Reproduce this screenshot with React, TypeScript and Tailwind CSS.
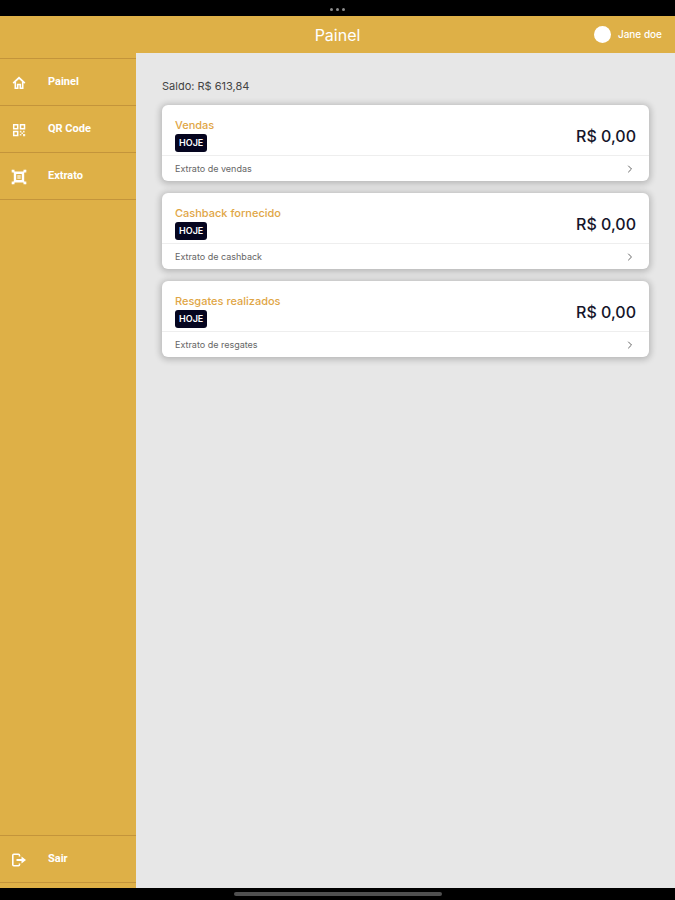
import { ChevronRight } from "lucide-react";
import type { ReactNode } from "react";

type Card = {
  title: string;
  value: string;
  link: string;
};

const cards: Card[] = [
  { title: "Vendas", value: "R$ 0,00", link: "Extrato de vendas" },
  { title: "Cashback fornecido", value: "R$ 0,00", link: "Extrato de cashback" },
  { title: "Resgates realizados", value: "R$ 0,00", link: "Extrato de resgates" },
];

function HomeIcon() {
  return (
    <svg width="16" height="16" viewBox="0 0 16 16" fill="none" stroke="currentColor" aria-hidden="true">
      <path d="M2.200 8.200L8 2.800l5.800 5.400" strokeWidth="1.800" />
      <path d="M4.300 7v6.200h2.400V9.500h2.600v3.700h2.400V7" strokeWidth="1.600" />
    </svg>
  );
}

function QrIcon() {
  return (
    <svg width="16" height="16" viewBox="0 0 16 16" fill="none" stroke="currentColor" aria-hidden="true">
      <path d="M2.700 2.700h4v4h-4zM9.500 2.700h4v4h-4zM2.700 9.500h4v4h-4z" strokeWidth="1.500" />
      <path
        d="M8.800 8.800h1.600v1.600H8.800zM12 8.800h1.600v1.600H12zM10.400 10.400H12V12h-1.600zM8.800 12h1.600v1.600H8.800zM12 12h2.200v2.200H12z"
        fill="currentColor"
        stroke="none"
        fillOpacity="0.85"
      />
    </svg>
  );
}

function StatementIcon() {
  return (
    <svg width="16" height="16" viewBox="0 0 16 16" fill="none" stroke="currentColor" aria-hidden="true">
      <path d="M4 3.800h8v8.400H4z" strokeWidth="2.400" />
      <path d="M1.300 3.500V1.300h2.200M12.500 1.300h2.200v2.200M14.700 12.500v2.200h-2.200M3.500 14.700H1.300v-2.200" strokeWidth="1.200" />
      <path d="M1.300 1.300l2.700 2.700M14.700 1.300L12 4M14.700 14.700L12 12M1.300 14.700L4 12" strokeWidth="1.600" />
      <path d="M6.300 6h3.400v4H6.300z" fill="currentColor" stroke="none" fillOpacity="0.6" />
    </svg>
  );
}

function LogoutIcon() {
  return (
    <svg width="16" height="16" viewBox="0 0 16 16" fill="none" stroke="currentColor" aria-hidden="true">
      <path d="M8.500 4.500V3.300q0-1-1-1H2.800q-1 0-1 1v9.400q0 1 1 1h4.700q1 0 1-1v-1.200" strokeWidth="1.600" />
      <path d="M5.500 8H12" strokeWidth="2" />
      <path d="M10.500 4.500L15 8l-4.500 3.500z" fill="currentColor" stroke="none" />
    </svg>
  );
}

function MenuItem({ icon, label }: { icon: ReactNode; label: string }) {
  return (
    <li className="border-b border-[#c3943b]">
      <a href="#" className="flex h-[46px] items-center gap-5 pt-px pl-[11px] text-[11px] font-bold text-white">
        <span className="flex w-4 shrink-0 justify-center">{icon}</span>
        <span className="pl-px">{label}</span>
      </a>
    </li>
  );
}

function SummaryCard({ card }: { card: Card }) {
  return (
    <section className="rounded-md bg-white shadow-[0_1px_6px_2px_rgba(0,0,0,0.2)]">
      <div className="flex h-[50px] items-center justify-between px-[13px] pt-3">
        <div className="flex flex-col items-start gap-px self-start">
          <h2 className="text-[11px] leading-4 font-medium text-[#dfa646]">{card.title}</h2>
          <span className="rounded-[3px] bg-[#05051f] px-1 text-[9px] leading-[18px] font-semibold text-white">HOJE</span>
        </div>
        <p className="text-base font-medium text-[#15152a]">{card.value}</p>
      </div>
      <a
        href="#"
        className="flex h-[26px] items-center justify-between border-t border-[#eeeeee] px-[13px] text-[9px] text-[#666666]"
      >
        {card.link}
        <ChevronRight size={12} className="text-[#666666]" />
      </a>
    </section>
  );
}

export default function App() {
  return (
    <div className="flex min-h-screen flex-col bg-black font-['Inter','Liberation_Sans',sans-serif]">
      {/* Status bar */}
      <div className="flex h-4 items-center justify-center gap-[3px] pt-[2px]">
        <span className="size-[3px] rounded-full bg-[#8c8c8c]" />
        <span className="size-[3px] rounded-full bg-[#8c8c8c]" />
        <span className="size-[3px] rounded-full bg-[#8c8c8c]" />
      </div>

      <header className="grid h-[37px] grid-cols-3 items-center bg-[#deb047] px-[13px] text-white">
        <h1 className="col-start-2 text-center text-base">Painel</h1>
        <div className="flex items-center justify-end gap-[7px] text-[10px] font-medium">
          <span className="size-[17px] rounded-full bg-white" />
          Jane doe
        </div>
      </header>

      <div className="flex grow">
        <nav className="flex w-34 shrink-0 flex-col justify-between bg-[#deb047] py-[5px] font-['Roboto','Liberation_Sans',sans-serif]">
          <ul className="border-t border-[#c3943b]">
            <MenuItem icon={<HomeIcon />} label="Painel" />
            <MenuItem icon={<QrIcon />} label="QR Code" />
            <MenuItem icon={<StatementIcon />} label="Extrato" />
          </ul>
          <ul className="border-t border-[#c3943b]">
            <MenuItem icon={<LogoutIcon />} label="Sair" />
          </ul>
        </nav>

        <main className="grow bg-[#e7e7e7] px-[26px] pt-[25px]">
          <p className="text-[11px] leading-4 text-[#444444]">Saldo: R$ 613,84</p>
          <div className="mt-[11px] flex flex-col gap-3">
            {cards.map((card) => (
              <SummaryCard key={card.title} card={card} />
            ))}
          </div>
        </main>
      </div>

      {/* Home indicator */}
      <div className="flex h-3 items-center justify-center">
        <span className="h-1 w-[208px] rounded-full bg-[#505050]" />
      </div>
    </div>
  );
}
